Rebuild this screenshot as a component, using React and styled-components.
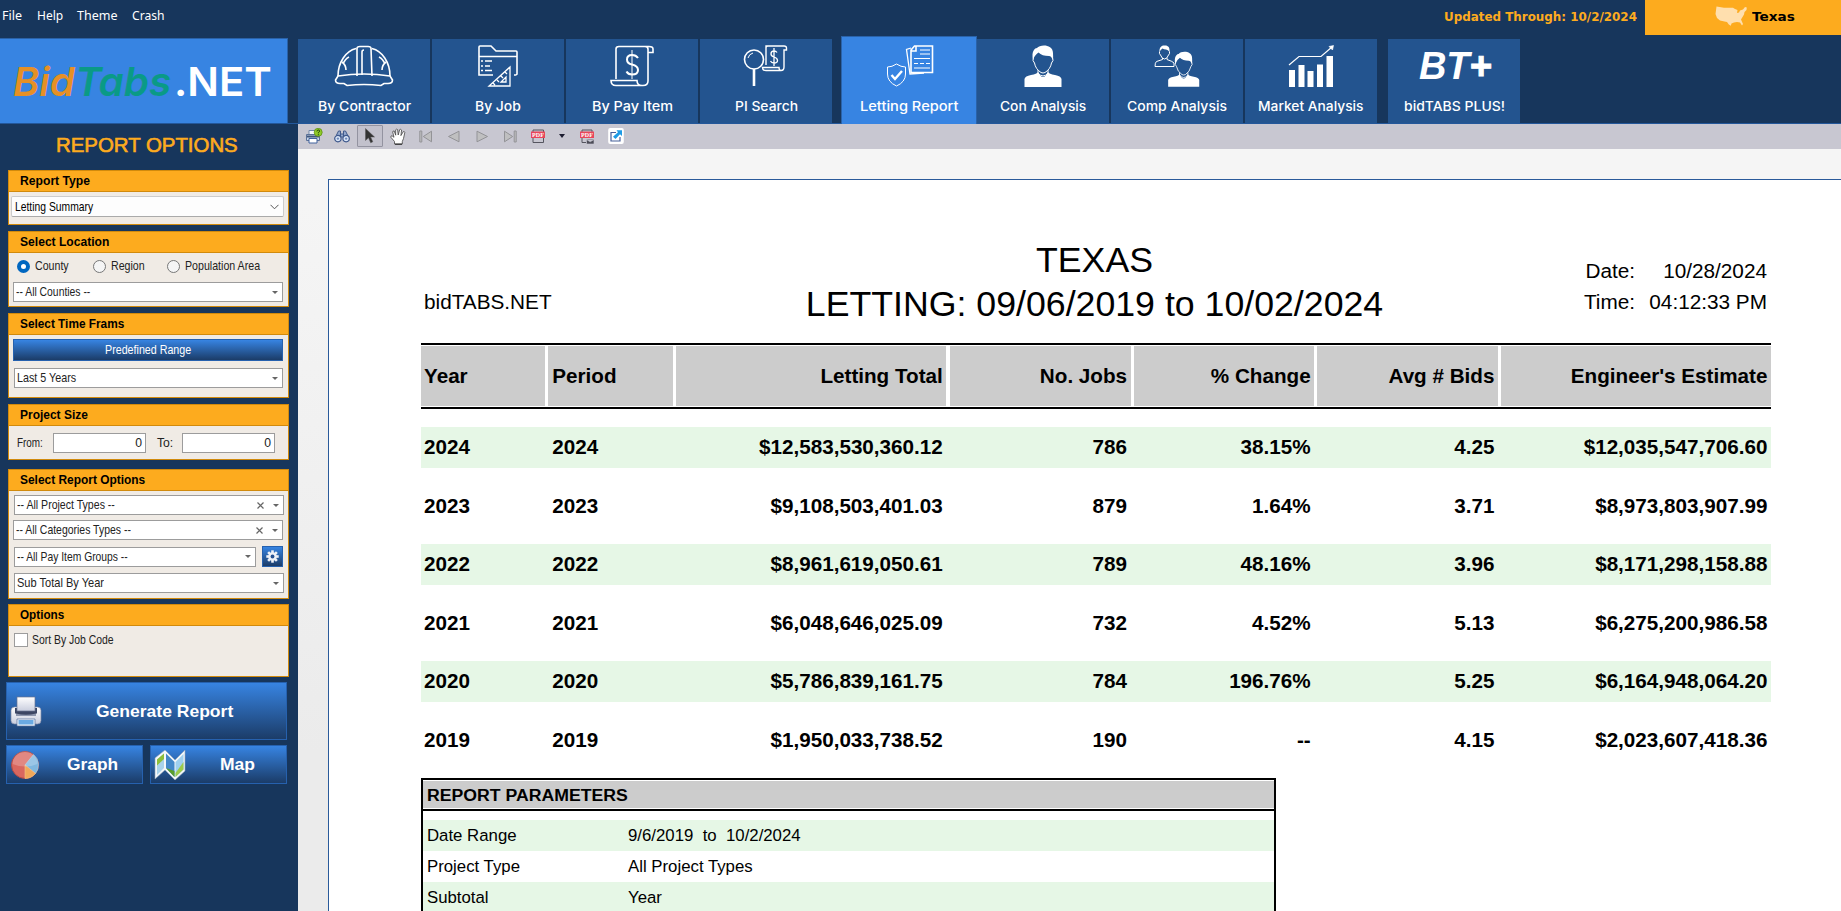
import React, { useLayoutEffect, useRef, useState } from 'react'
import styled, { createGlobalStyle, css } from 'styled-components'

const navy = '#17365c'
const blue = '#23548f'
const bright = '#3784e2'
const orange = '#fdab1e'

// squeezes or stretches a label to the width the design gives it
const Fit = ({ w, children }) => {
  const ref = useRef(null)
  const [scale, setScale] = useState(1)
  useLayoutEffect(() => {
    setScale(w / ref.current.offsetWidth)
  }, [w])
  return (
    <FitBox $w={w}>
      <FitInner ref={ref} style={{ transform: `scaleX(${scale})` }}>{children}</FitInner>
    </FitBox>
  )
}

const HelmetIcon = () => (
  <TabSvg viewBox="0 0 60 42">
    <path d="M4 31C4 17 12 6 22 3.500M56 31C56 17 48 6 38 3.500M23 31V3.500Q23 1.500 26 1.500H34Q37 1.500 37 3.500L38 31M28 30V7Q28 5 30 5" />
    <path d="M4 31Q30 27 56 31L58.500 35Q58.500 38.500 54 38.500H50L47 40.500Q30 38.500 13 40.500L10 38.500H6Q1.500 38.500 1.500 35Z" />
    <path d="M8 17Q12 20 12 25M15 12Q11 14 9 19M52 17Q48 20 48 25M45 12Q49 14 51 19" />
  </TabSvg>
)

const JobIcon = () => (
  <TabSvg viewBox="0 0 60 42">
    <path d="M25 30H11V2Q11 1 12 1H23L28 6H48Q49 6 49 7V29Q49 30 46 30M11 11.500H49" />
    <path d="M13 16H15M13 21H15M13 25.500H15M17 16H24M17 21H22M17 25.500H24" />
    <path d="M42 22V41H21Z M38 32V37H33Z M37 27L39 29M33 31L35 33M29 35L31 37M25 38L27 40" strokeWidth="1.300" />
  </TabSvg>
)

const PayIcon = () => (
  <TabSvg viewBox="0 0 60 42">
    <path d="M14 34V4Q14 1.500 17 1.500H47Q51 1.500 51 4V7.500H46V4Q46 1.500 43 1.500M46 7V36Q46 40.500 41 40.500H14Q9 40.500 9 35.500H35Q35 40.500 40 40.500" />
    <path d="M36 13Q34 10 30 10Q25 10 25 14.500Q25 18.500 30 19.500Q36 21 36 25Q36 29.500 30 29.500Q26 29.500 24.500 26.500" strokeWidth="2" />
    <path d="M30 5V34" strokeWidth="1" />
  </TabSvg>
)

const SearchIcon = () => (
  <TabSvg viewBox="0 0 60 42">
    <circle cx="18" cy="14.500" r="9.500" />
    <path d="M12 13Q13 9 17 8" strokeWidth="1" />
    <path d="M18 24V41" strokeWidth="2.600" />
    <path d="M30 20V3Q30 1 32 1H48Q50.500 1 50.500 3V5H48V22Q48 25.500 45 25.500H30Q26.500 25.500 26.500 22.500H43Q43 25.500 45 25.500M30 4V1H33" strokeWidth="1.400" />
    <path d="M41 7.500Q40 6 38 6Q35 6 35 9Q35 11 38 12Q41.500 13 41.500 15.500Q41.500 18 38 18Q35.500 18 34.500 16M38 3V21" strokeWidth="1.300" />
  </TabSvg>
)

const LettingIcon = () => (
  <TabSvg viewBox="0 0 60 42">
    <path d="M34.500 1H52.500V27.500H31V5ZM36 1V6H31.500" />
    <path d="M31 3L26.500 4.500L30 29L44 28" strokeWidth="1.300" />
    <path d="M40 5H50M40 9H50M34 13.500H50M34 18.500H38M40 18.500H44M46 18.500H50M34 23H50" strokeWidth="1.200" />
    <path d="M16.500 19Q21 22 25.500 22V29Q25.500 37 16.500 41Q7.500 37 7.500 29V22Q12 22 16.500 19Z" strokeWidth="1" />
    <path d="M11.500 30L15 34L22 26" strokeWidth="2.400" />
  </TabSvg>
)

const Person = () => (
  <>
    <path d="M20 15C18 6 22 3 24 3C27-1 40-1 40 8Q40.500 12 39.500 15Q38.500 11 36 11Q29 11 25.500 7.500Q21.500 10 20 15Z" fill="#fff" strokeWidth="0" />
    <path d="M20.500 12Q19 16 21.500 18Q22.500 24 28 27.500Q30 28.500 32 27.500Q37.500 24 38.500 18Q41 16 39.500 12" strokeWidth="1" />
    <path d="M11.500 42V34Q12 31 18 30Q24 29 25 27Q30 37 35 27Q36 29 42 30Q48 31 48.500 34V42Z" fill="#fff" strokeWidth="0" />
    <path d="M25 25V28Q30 34 35 28V25" strokeWidth="1" />
  </>
)

const ConIcon = () => (
  <TabSvg viewBox="0 0 60 42"><Person /></TabSvg>
)

const CompIcon = () => (
  <TabSvg viewBox="0 0 60 42">
    <g transform="translate(11.500 6.500) scale(.84)"><Person /></g>
    <path d="M12.500 7C12 2 15 .5 17 .5C21 0 23 2 22.500 7Q21 4.500 19 4.500Q17 4.500 15.500 3.500Q13.500 4.500 12.500 7Z" fill="#fff" strokeWidth="0" />
    <path d="M12.500 6.500Q12 9 13.500 10Q15 14 17.500 14Q20 14 21.500 10Q23 9 22.500 6.500M15.500 13V14.500L9.500 16.500Q8 17.500 8 21.500H27V18Q26 16.500 20 14.500V13" strokeWidth="1" />
  </TabSvg>
)

const MarketIcon = () => (
  <TabSvg viewBox="0 0 60 42">
    <path d="M8 25H14V42H8ZM17.500 20H23.500V42H17.500ZM26.500 26H32.500V42H26.500ZM36 19.500H42V42H36ZM45.500 11H52V42H45.500Z" fill="#fff" strokeWidth="0" />
    <path d="M8 20L18 11.500H40L51 2" strokeWidth="1.200" />
    <path d="M48 1.500L52.500 .5L51.500 5Z" fill="#fff" strokeWidth=".6" />
  </TabSvg>
)

const PrintHelpIcon = () => (
  <svg width="17" height="16" viewBox="0 0 17 16">
    <path d="M3 2.500H10V8H3Z" fill="#f4f7fb" stroke="#7086a8" />
    <path d="M.5 6.500H13.500V12.500H.5Z" fill="#c9d5e8" stroke="#5b7197" />
    <path d="M1 7.500H13V9.500H1Z" fill="#41567d" />
    <path d="M3 10.500H11V15H3Z" fill="#fff" stroke="#41639e" />
    <circle cx="12.200" cy="4.300" r="4" fill="#8fcb28" stroke="#57880f" strokeWidth=".7" />
    <path d="M10.900 3.400Q11 2 12.400 2Q13.700 2.100 13.600 3.200Q13.500 4 12.300 4.700V5.300M12.300 6.200V7.200" fill="none" stroke="#223c08" strokeWidth="1" />
  </svg>
)

const BinocularsIcon = () => (
  <svg width="16" height="13" viewBox="0 0 16 13">
    <path d="M2.500 5L4.500 1H6.500V8M13.500 5L11.500 1H9.500V8M6.500 4H9.500V7H6.500Z" fill="#94a8cc" stroke="#405a8c" />
    <circle cx="3.900" cy="8.600" r="3.200" fill="#dbe6f7" stroke="#3e588c" strokeWidth="1.200" />
    <circle cx="12.100" cy="8.600" r="3.200" fill="#dbe6f7" stroke="#3e588c" strokeWidth="1.200" />
    <circle cx="3.900" cy="8.600" r="1.200" fill="#6f8bbd" />
    <circle cx="12.100" cy="8.600" r="1.200" fill="#6f8bbd" />
  </svg>
)

const CursorIcon = () => (
  <svg width="12" height="16" viewBox="0 0 12 16">
    <path d="M1.500 .5V12.500L4.500 9.800L6.700 14.800L8.800 13.800L6.600 9H10.500Z" fill="#333" stroke="#555" strokeWidth=".5" />
  </svg>
)

const HandIcon = () => (
  <svg width="17" height="17" viewBox="0 0 17 17">
    <path d="M4.500 16V13.500L.8 9.200Q.6 7.800 2 7.700L4 9.300L2.700 4Q3 2.600 4.200 3L5.700 7.200L5.700 1.800Q6.500 .6 7.600 1.600L8.200 7L9.700 1.600Q10.900 .8 11.600 2L10.900 7.600L13.300 3.600Q14.700 3.300 14.800 4.500L13.500 10.500L12.300 13.500V16Z" fill="#fff" stroke="#444" strokeWidth=".8" />
    <path d="M5 16.200H12" stroke="#222" />
  </svg>
)

const NavIcon = ({ flip, bar }) => (
  <svg width="14" height="13" viewBox="0 0 14 13">
    <g transform={flip ? 'translate(14 0) scale(-1 1)' : undefined} fill="#bfbfc0" stroke="#939397">
      {bar && <path d="M.8 1H2.800V12H.8Z" />}
      <path d={bar ? 'M12.500 1.200V11.800L4.300 6.500Z' : 'M12 1.200V11.800L1.500 6.500Z'} />
    </g>
  </svg>
)

const PdfIcon = ({ mail }) => (
  <svg width="14" height="15" viewBox="0 0 14 15">
    <path d={mail ? 'M2 3V1H12V4M2 8V13.500H6' : 'M2 3V1H12.500V4M2 8V13.500H12.500V8'} fill="none" stroke="#55555f" />
    <path d="M0 2.500H14V9H0Z" fill="#e8465a" />
    <text x="7" y="7.900" textAnchor="middle" fontFamily="Liberation Serif, serif" fontWeight="bold" fontSize="6" textLength="12" fill="#fff">PDF</text>
    {mail && <path d="M6.500 10H14V15H6.500ZM6.500 10.500L10.200 12.800L14 10.500" fill="#4c4c57" stroke="#c8c7d1" strokeWidth=".6" />}
  </svg>
)

const ExportIcon = () => (
  <svg width="16" height="16" viewBox="0 0 16 16">
    <rect x=".2" width="15.600" height="16" rx="2" fill="#fff" />
    <path d="M8 4.500H3V13H12V9" fill="none" stroke="#46609a" strokeWidth="1.200" />
    <path d="M8.500 2.200H14V8L12 6.300L7.500 11L5 8.800L10 4.200Z" fill="#1d9be6" />
  </svg>
)

const UsaIcon = () => (
  <svg width="33" height="20" viewBox="0 0 33 20">
    <path d="M1.500 .5L9 1.800H18L20 3L22.500 4L22 7L24 6.500L25 4.500L28 3.500L30 1L31.800 1.500L31.500 4L29.500 6L29 8.500L27.500 11L26 13.500L28 18L27 19.500L25 16.500L22 16L19 16.500L16.500 17.500L15.800 19.800L13.800 18.500L12 16L9.500 15.500L5 14.500L2 12L.5 8Z" fill="#ffdfae" />
  </svg>
)

const GearIcon = () => (
  <svg width="13" height="13" viewBox="-6.500 -6.500 13 13">
    <g fill="#eef1f7">
      {[0, 45, 90, 135].map((a) => (
        <rect key={a} x="-1.300" y="-6.200" width="2.600" height="12.400" transform={`rotate(${a})`} />
      ))}
      <circle r="4.300" />
    </g>
    <circle r="1.900" fill="#255192" />
  </svg>
)

const PrinterIcon = () => (
  <svg width="32" height="32" viewBox="0 0 32 32">
    <defs>
      <linearGradient id="paper" x1="0" y1="0" x2="0" y2="1">
        <stop offset="0" stopColor="#fff" /><stop offset="1" stopColor="#c9cede" />
      </linearGradient>
    </defs>
    <rect x="1" y="11" width="30" height="17" rx="3.500" fill="url(#paper)" stroke="#7e8aa8" strokeWidth=".7" />
    <path d="M5 12H27V17Q26 19 23 19H9Q6 19 5 17Z" fill="#3c4663" />
    <rect x="7" y="1" width="18" height="14" fill="url(#paper)" stroke="#6b7692" strokeWidth=".7" />
    <path d="M6 17.500Q16 20 26 17.500V20H6Z" fill="#8d96ad" />
    <path d="M7 23H25V30H7Z" fill="#f1f6fc" stroke="#56719b" strokeWidth=".7" />
    <path d="M8.500 24H23.500V28.500H8.500Z" fill="#6baae2" />
  </svg>
)

const PieIcon = () => (
  <svg width="30" height="30" viewBox="0 0 30 30">
    <circle cx="15" cy="15" r="13.500" fill="#d9675f" stroke="#b04a45" />
    <path d="M15 15L23.500 4.500A13.500 13.500 0 0 1 25.500 23.500Z" fill="#7fb7df" stroke="#a5d0ec" strokeWidth=".6" />
    <path d="M15 15L25.500 23.500A13.500 13.500 0 0 1 15 28.500Z" fill="#f0a85a" stroke="#f5c58c" strokeWidth=".6" />
    <path d="M2.500 14A12.500 12.500 0 0 1 27.500 14Q15 19 2.500 14Z" fill="#fff" opacity=".22" />
  </svg>
)

const MapIcon = () => (
  <svg width="32" height="32" viewBox="0 0 32 32">
    <path d="M1 9L11 1L21 11L31 1V22L21 31L11 21L1 30Z" fill="#f4f7fa" stroke="#8ea2b5" strokeWidth=".6" />
    <path d="M3 10.500L10 4.500V19L3 26Z" fill="#a9d2ea" />
    <path d="M3 10.500L10 4.500V10L3 16.500Z" fill="#8dbf3a" />
    <path d="M12 4.500L20.500 13V28L12 19Z" fill="#4387c8" />
    <path d="M12 19L20.500 22V28Z" fill="#5a9e2c" />
    <path d="M21.500 13L29.500 5V20.500L21.500 28Z" fill="#9fd0ef" />
    <path d="M21.500 24L29.500 13V20.500L21.500 28Z" fill="#9dcb4a" />
  </svg>
)

const tabs = [
  { label: 'By Contractor', w: 93, icon: <HelmetIcon /> },
  { label: 'By Job', w: 46, icon: <JobIcon /> },
  { label: 'By Pay Item', w: 81, icon: <PayIcon /> },
  { label: 'PI Search', w: 63, icon: <SearchIcon /> },
  { label: 'Letting Report', w: 99, icon: <LettingIcon />, active: true },
  { label: 'Con Analysis', w: 86, icon: <ConIcon /> },
  { label: 'Comp Analysis', w: 100, icon: <CompIcon /> },
  { label: 'Market Analysis', w: 106, icon: <MarketIcon /> },
]

const columns = ['Year', 'Period', 'Letting Total', 'No. Jobs', '% Change', 'Avg # Bids', "Engineer's Estimate"]

const rows = [
  ['2024', '2024', '$12,583,530,360.12', '786', '38.15%', '4.25', '$12,035,547,706.60'],
  ['2023', '2023', '$9,108,503,401.03', '879', '1.64%', '3.71', '$8,973,803,907.99'],
  ['2022', '2022', '$8,961,619,050.61', '789', '48.16%', '3.96', '$8,171,298,158.88'],
  ['2021', '2021', '$6,048,646,025.09', '732', '4.52%', '5.13', '$6,275,200,986.58'],
  ['2020', '2020', '$5,786,839,161.75', '784', '196.76%', '5.25', '$6,164,948,064.20'],
  ['2019', '2019', '$1,950,033,738.52', '190', '--', '4.15', '$2,023,607,418.36'],
]

const params = [
  ['Date Range', '9/6/2019  to  10/2/2024'],
  ['Project Type', 'All Project Types'],
  ['Subtotal', 'Year'],
]

const Select = ({ label, w, clear, ...rest }) => (
  <SelectBox {...rest}>
    <Fit w={w}>{label}</Fit>
    <SelectTools>
      {clear && (
        <svg width="7" height="7" viewBox="0 0 7 7"><path d="M.5 .5L6.500 6.500M6.500 .5L.5 6.500" stroke="#666" strokeWidth="1.200" /></svg>
      )}
      <Caret />
    </SelectTools>
  </SelectBox>
)

const Sidebar = () => (
  <SidebarBox>
    <SidebarTitle><Fit w={182}>REPORT OPTIONS</Fit></SidebarTitle>
    <Group $h={55} $gap={6}>
      <GroupTitle><Fit w={70}>Report Type</Fit></GroupTitle>
      <ThemedSelect>
        <Fit w={78}>Letting Summary</Fit>
        <svg width="9" height="6" viewBox="0 0 9 6"><path d="M.5 .8L4.500 4.800L8.500 .8" fill="none" stroke="#555" /></svg>
      </ThemedSelect>
    </Group>
    <Group $h={76} $gap={6}>
      <GroupTitle><Fit w={89}>Select Location</Fit></GroupTitle>
      <RadioRow>
        <RadioLabel $w={76}><Radio $on /><Fit w={34}>County</Fit></RadioLabel>
        <RadioLabel $w={74}><Radio /><Fit w={34}>Region</Fit></RadioLabel>
        <RadioLabel $w={100}><Radio /><Fit w={75}>Population Area</Fit></RadioLabel>
      </RadioRow>
      <Select label="-- All Counties --" w={74} $top={6} />
    </Group>
    <Group $h={85} $gap={6}>
      <GroupTitle><Fit w={104}>Select Time Frams</Fit></GroupTitle>
      <RangeButton><Fit w={86}>Predefined Range</Fit></RangeButton>
      <Select label="Last 5 Years" w={59} $top={7} $left={5} $w={269} />
    </Group>
    <Group $h={56} $gap={9}>
      <GroupTitle><Fit w={68}>Project Size</Fit></GroupTitle>
      <SizeRow>
        <SizeLabel $w={36}><Fit w={26}>From:</Fit></SizeLabel>
        <NumberBox>0</NumberBox>
        <SizeLabel $w={25}><Fit w={16}>To:</Fit></SizeLabel>
        <NumberBox>0</NumberBox>
      </SizeRow>
    </Group>
    <Group $h={130} $gap={5}>
      <GroupTitle><Fit w={125}>Select Report Options</Fit></GroupTitle>
      <Select label="-- All Project Types --" w={98} clear $top={4} $left={5} />
      <Select label="-- All Categories Types --" w={115} clear $top={5} />
      <PayRow>
        <Select label="-- All Pay Item Groups --" w={111} $left={5} $w={242} />
        <GearButton><GearIcon /></GearButton>
      </PayRow>
      <Select label="Sub Total By Year" w={87} $top={6} $left={5} />
    </Group>
    <Group $h={73} $gap={5}>
      <GroupTitle><Fit w={44}>Options</Fit></GroupTitle>
      <CheckRow><CheckBox /><Fit w={82}>Sort By Job Code</Fit></CheckRow>
    </Group>
    <GenerateButton>
      <PrinterIcon />
      <Fit w={137}>Generate Report</Fit>
    </GenerateButton>
    <ButtonPair>
      <SmallButton $pad={25}><PieIcon /><Fit w={51}>Graph</Fit></SmallButton>
      <SmallButton $pad={32}><MapIcon /><Fit w={35}>Map</Fit></SmallButton>
    </ButtonPair>
  </SidebarBox>
)

const Report = () => (
  <Page>
    <ReportHead>
      <Brand>bidTABS.NET</Brand>
      <Titles>
        <div>TEXAS</div>
        <div>LETTING: 09/06/2019 to 10/02/2024</div>
      </Titles>
      <Stamps>
        <span>Date:</span><span>10/28/2024</span>
        <span>Time:</span><span>04:12:33 PM</span>
      </Stamps>
    </ReportHead>
    <TableHead>
      {columns.map((c, i) => <HeadCell key={c} $right={i > 1}>{c}</HeadCell>)}
    </TableHead>
    <TableBody>
      {rows.map((r, i) => (
        <Row key={r[0]} $green={i % 2 === 0}>
          {r.map((v, k) => <Cell key={k} $right={k > 1}>{v}</Cell>)}
        </Row>
      ))}
    </TableBody>
    <Params>
      <ParamsTitle><Fit w={201}>REPORT PARAMETERS</Fit></ParamsTitle>
      <ParamsBody>
        {params.map(([k, v], i) => (
          <ParamRow key={k} $green={i % 2 === 0}><span>{k}</span><span>{v}</span></ParamRow>
        ))}
      </ParamsBody>
    </Params>
  </Page>
)

const App = () => {
  return (
    <>
      <GlobalStyle />
      <Window>
        <MenuBar>
          <MenuItem $w={35}><Fit w={20}>File</Fit></MenuItem>
          <MenuItem $w={40}><Fit w={26}>Help</Fit></MenuItem>
          <MenuItem $w={55}><Fit w={40}>Theme</Fit></MenuItem>
          <MenuItem $w={40}><Fit w={33}>Crash</Fit></MenuItem>
          <Updated><Fit w={193}>Updated Through: 10/2/2024</Fit></Updated>
          <StateBox><UsaIcon /><Fit w={43}>Texas</Fit></StateBox>
        </MenuBar>
        <TabBar>
          <Logo>
            <LogoWord $color="#e69025"><Fit w={62}>Bid</Fit></LogoWord>
            <LogoWord $color="#0a9a86"><Fit w={96}>Tabs</Fit></LogoWord>
            <LogoNet><Fit w={98}>.NET</Fit></LogoNet>
          </Logo>
          {tabs.map((t) => (
            <Tab key={t.label} $active={t.active}>
              {t.icon}
              <TabLabel><Fit w={t.w}>{t.label}</Fit></TabLabel>
            </Tab>
          ))}
          <PlusTab>
            <PlusMark><Fit w={51}>BT</Fit><PlusSign>+</PlusSign></PlusMark>
            <TabLabel><Fit w={101}>bidTABS PLUS!</Fit></TabLabel>
          </PlusTab>
        </TabBar>
        <Main>
          <Sidebar />
          <Viewer>
            <Toolbar>
              <Tool><PrintHelpIcon /></Tool>
              <Tool><BinocularsIcon /></Tool>
              <Tool $pressed><CursorIcon /></Tool>
              <Tool><HandIcon /></Tool>
              <Tool><NavIcon bar /></Tool>
              <Tool><NavIcon /></Tool>
              <Tool><NavIcon flip /></Tool>
              <Tool><NavIcon flip bar /></Tool>
              <Tool><PdfIcon /></Tool>
              <Tool $w={19}><ToolCaret /></Tool>
              <Tool $w={32}><PdfIcon mail /></Tool>
              <Tool $w={25}><ExportIcon /></Tool>
            </Toolbar>
            <Report />
          </Viewer>
        </Main>
      </Window>
    </>
  )
}

export default App


const GlobalStyle = createGlobalStyle`
  * { box-sizing: border-box; }
  body {
    margin: 0;
    overflow: hidden;
    font-family: "Liberation Sans", Arial, sans-serif;
  }
`

const FitBox = styled.span`
  display: inline-block;
  flex: none;
  width: ${(p) => p.$w}px;
  white-space: pre;
`

const FitInner = styled.span`
  display: inline-block;
  transform-origin: 0 50%;
`

const Window = styled.div`
  display: flex;
  flex-direction: column;
  width: 1841px;
  height: 911px;
  overflow: hidden;
  background: ${navy};
`

const MenuBar = styled.div`
  display: flex;
  height: 35px;
  padding-left: 2px;
  color: #fff;
  font: 12.5px "Noto Sans", sans-serif;
`

const MenuItem = styled.div`
  width: ${(p) => p.$w}px;
  line-height: 31px;
`

const Updated = styled.div`
  margin-left: auto;
  margin-right: 8px;
  line-height: 34px;
  color: ${orange};
  font-family: "DejaVu Sans Condensed", "DejaVu Sans", sans-serif;
  font-weight: bold;
  font-size: 12px;
`

const StateBox = styled.div`
  display: flex;
  align-items: center;
  gap: 4px;
  width: 196px;
  height: 35px;
  padding: 0 0 3px 70px;
  background: ${orange};
  color: #000;
  font: bold 13px "DejaVu Sans", sans-serif;
`

const TabBar = styled.div`
  display: flex;
  align-items: flex-end;
  gap: 2px;
  height: 89px;
  border-bottom: 1px solid #23579a;
`

const Logo = styled.div`
  display: flex;
  align-items: center;
  width: 288px;
  height: 85px;
  margin-right: 8px;
  padding: 1px 0 0 13px;
  border: 1px solid #2a62a8;
  border-left: 0;
  border-bottom: 0;
  background: ${bright};
  font-family: Inter, sans-serif;
  font-size: 40px;
  line-height: 48px;
`

const LogoWord = styled.span`
  font-style: italic;
  font-weight: 600;
  color: ${(p) => p.$color};
`

const LogoNet = styled.span`
  margin-left: 3px;
  font-weight: 600;
  color: #fff;
`

const Tab = styled.div`
  display: flex;
  flex-direction: column;
  align-items: center;
  width: 132px;
  height: 84px;
  padding-top: 6px;
  background: ${blue};
  ${(p) => p.$active && css`
    width: 136px;
    height: 88px;
    margin: 0 -2px -1px 7px;
    padding: 8px 0 0 1px;
    border: 1px solid #2a62a8;
    border-bottom: 0;
    background: ${bright};
  `}
`

const PlusTab = styled(Tab)`
  margin-left: 9px;
`

const TabSvg = styled.svg`
  width: 60px;
  height: 42px;
  flex: none;
  fill: none;
  stroke: #fff;
  stroke-width: 1.6;
  overflow: visible;
`

const TabLabel = styled.div`
  margin-top: 9px;
  color: #fff;
  font: 500 13px/20px Inter, sans-serif;
`

const PlusMark = styled.div`
  display: flex;
  height: 42px;
  padding-left: 3px;
  color: #fff;
  font: italic bold 38px/43px "Liberation Sans", Arial, sans-serif;
`

const PlusSign = styled.span`
  font-style: normal;
  -webkit-text-stroke: 1px #fff;
`

const Main = styled.div`
  display: flex;
  flex: 1;
  min-height: 0;
`

const SidebarBox = styled.div`
  width: 298px;
  flex: none;
  padding-left: 8px;
  font-size: 12.2px;
  color: #222;
`

const SidebarTitle = styled.div`
  height: 46px;
  padding-left: 48px;
  line-height: 42px;
  font-size: 19.5px;
  -webkit-text-stroke: 0.6px ${orange};
  color: ${orange};
`

const Group = styled.div`
  width: 281px;
  height: ${(p) => p.$h}px;
  margin-bottom: ${(p) => p.$gap}px;
  border: 1px solid #d18a0c;
  background: #f0ebe5;
`

const GroupTitle = styled.div`
  height: 21px;
  padding-left: 11px;
  border-bottom: 1px solid #d18a0c;
  background: ${orange};
  color: #000;
  font-size: 12.5px;
  font-weight: bold;
  line-height: 20px;
`

const SelectBox = styled.div`
  display: flex;
  align-items: center;
  justify-content: space-between;
  width: ${(p) => p.$w || 270}px;
  height: 20px;
  margin-top: ${(p) => p.$top || 0}px;
  margin-left: ${(p) => p.$left || 4}px;
  padding: 0 4px 0 2px;
  border: 1px solid #9c9c9c;
  background: #fff;
`

const SelectTools = styled.div`
  display: flex;
  align-items: center;
  gap: 9px;
`

const Caret = styled.i`
  border: 3px solid transparent;
  border-top-color: #666;
  border-bottom: 0;
`

const ThemedSelect = styled.div`
  display: flex;
  align-items: center;
  justify-content: space-between;
  width: 273px;
  height: 21px;
  margin: 4px 0 0 2px;
  padding: 0 4px 0 3px;
  border: 1px solid #ccc;
  border-bottom-color: #aaa;
  border-radius: 2px;
  background: #fdfdfd;
  color: #000;
`

const RadioRow = styled.div`
  display: flex;
  height: 20px;
  margin: 3px 0 0 8px;
`

const RadioLabel = styled.div`
  display: flex;
  align-items: center;
  gap: 5px;
  width: ${(p) => p.$w}px;
`

const Radio = styled.i`
  width: 13px;
  height: 13px;
  border: ${(p) => (p.$on ? '4px solid #0067c0' : '1px solid #777')};
  border-radius: 50%;
  background: ${(p) => (p.$on ? '#fff' : '#f5f5f5')};
`

const BlueButton = styled.div`
  display: flex;
  align-items: center;
  border: 1px solid #2661ae;
  background: linear-gradient(${bright}, #1b3c68);
  color: #fff;
`

const RangeButton = styled(BlueButton)`
  justify-content: center;
  width: 270px;
  height: 22px;
  margin: 4px 0 0 4px;
`

const SizeRow = styled.div`
  display: flex;
  margin: 7px 0 0 8px;
`

const SizeLabel = styled.div`
  width: ${(p) => p.$w}px;
  line-height: 20px;
`

const NumberBox = styled.div`
  width: 93px;
  height: 20px;
  margin-right: 11px;
  padding-right: 3px;
  border: 1px solid #9c9c9c;
  background: #fff;
  line-height: 19px;
  text-align: right;
`

const PayRow = styled.div`
  display: flex;
  align-items: center;
  margin-top: 6px;
`

const GearButton = styled(BlueButton)`
  justify-content: center;
  width: 21px;
  height: 21px;
  margin-left: 6px;
`

const CheckRow = styled.div`
  display: flex;
  align-items: center;
  gap: 4px;
  margin: 7px 0 0 5px;
`

const CheckBox = styled.i`
  width: 14px;
  height: 14px;
  border: 1px solid #9c9c9c;
  background: #fff;
`

const GenerateButton = styled(BlueButton)`
  gap: 54px;
  width: 281px;
  height: 58px;
  margin-left: -2px;
  padding: 1px 0 0 3px;
  font-size: 17px;
  font-weight: bold;
`

const ButtonPair = styled.div`
  display: flex;
  gap: 7px;
  margin: 5px 0 0 -2px;
`

const SmallButton = styled(BlueButton)`
  gap: ${(p) => p.$pad + 2}px;
  width: 137px;
  height: 39px;
  padding-left: 3px;
  font-size: 17px;
  font-weight: bold;
`

const Viewer = styled.div`
  flex: 1;
  min-width: 0;
  display: flex;
  flex-direction: column;
  background: linear-gradient(#f5f5f5 10%, #ebebeb 80%);
`

const Toolbar = styled.div`
  display: flex;
  align-items: center;
  height: 25px;
  padding: 0 0 1px 2px;
  background: #c8c7d1;
`

const Tool = styled.div`
  display: flex;
  align-items: center;
  justify-content: center;
  flex: none;
  width: ${(p) => p.$w || 28}px;
  height: 22px;
  ${(p) => p.$pressed && css`
    width: 26px;
    margin: 0 1px;
    border: 1px solid #9393a0;
    border-radius: 1px;
    background: #c2c1cc;
  `}
`

const ToolCaret = styled.i`
  border: 3.5px solid transparent;
  border-top: 4px solid #1c1c30;
  border-bottom: 0;
`

const Page = styled.div`
  flex: 1;
  min-height: 0;
  margin: 30px 0 0 30px;
  padding: 58px 70px 0 92px;
  border: 1px solid #2a5a9a;
  border-right: 0;
  border-bottom: 0;
  background: #fff;
  color: #000;
  overflow: hidden;
`

const ReportHead = styled.div`
  display: grid;
  grid-template-columns: 250px 1fr 250px;
  height: 105px;
  font-size: 20.75px;
`

const Brand = styled.div`
  padding: 48px 0 0 3px;
  line-height: 31px;
`

const Titles = styled.div`
  padding-right: 3px;
  font-size: 35.7px;
  line-height: 44px;
  text-align: center;
  white-space: nowrap;
`

const Stamps = styled.div`
  display: grid;
  grid-template-columns: 1fr 132px;
  align-content: start;
  padding: 17px 4px 0 0;
  line-height: 31px;
  text-align: right;
`

const tableColumns = css`
  display: grid;
  grid-template-columns: 124px 124.7px 270px 181px 180.3px 180.5px 269.7px;
  column-gap: 3.3px;
  width: 1350px;
`

const TableHead = styled.div`
  ${tableColumns}
  height: 66px;
  padding: 1px 0;
  border-top: 2px solid #000;
  border-bottom: 2px solid #000;
`

const Cell = styled.div`
  padding: 0 3.5px 0 3px;
  text-align: ${(p) => (p.$right ? 'right' : 'left')};
  &:nth-child(2) {
    padding-left: 4px;
  }
`

const HeadCell = styled(Cell)`
  background: #ccc;
  font-size: 20.67px;
  font-weight: bold;
  line-height: 59px;
  white-space: nowrap;
`

const TableBody = styled.div`
  display: grid;
  grid-auto-rows: 41px;
  row-gap: 17.5px;
  padding-top: 18px;
`

const Row = styled.div`
  ${tableColumns}
  background: ${(p) => (p.$green ? '#e6f7e6' : '#fff')};
  font-size: 20.67px;
  font-weight: bold;
  line-height: 40.5px;
`

const Params = styled.div`
  width: 855px;
  margin-top: 17px;
  border-top: 2px solid #000;
  font-size: 16.8px;
`

const ParamsTitle = styled.div`
  height: 31px;
  padding-left: 4px;
  border: solid #000;
  border-width: 0 2px 2px;
  background: #ccc;
  box-shadow: inset 0 1px #fff, inset 0 -1px #fff;
  font-size: 17.4px;
  font-weight: bold;
  line-height: 30px;
`

const ParamsBody = styled.div`
  height: 200px;
  padding-top: 9px;
  border: solid #000;
  border-width: 0 2px;
`

const ParamRow = styled.div`
  display: grid;
  grid-template-columns: 201px 1fr;
  height: 31px;
  padding-left: 4px;
  background: ${(p) => (p.$green ? '#e6f7e6' : '#fff')};
  line-height: 31px;
  white-space: pre;
`
